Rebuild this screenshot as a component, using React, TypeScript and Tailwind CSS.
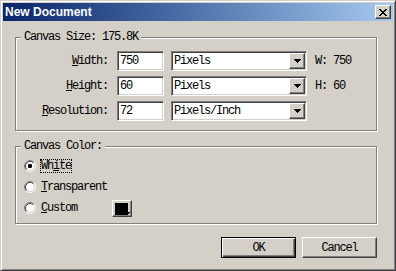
import React from "react";

const sys = "font-['Liberation_Mono',monospace] text-[12px] leading-[12px] tracking-[-1.2px] text-black";
const raised =
  "bg-[#d4d0c8] border border-t-white border-l-white border-r-[#404040] border-b-[#404040] shadow-[inset_-1px_-1px_0_#808080]";
const sunken =
  "bg-white border border-t-[#808080] border-l-[#808080] border-r-white border-b-white shadow-[inset_1px_1px_0_#404040,inset_-1px_-1px_0_#d4d0c8]";
const etched =
  "relative border border-[#808080] shadow-[inset_1px_1px_0_white,1px_1px_0_white]";

function Arrow() {
  return (
    <svg width="7" height="4" shapeRendering="crispEdges">
      <path d="M0 0h7v1h-1v1h-1v1h-1v1h-1v-1h-1v-1h-1v-1h-1z" fill="black" />
    </svg>
  );
}

function Select({ value }: { value: string }) {
  return (
    <div className={`${sunken} w-[136px] h-[20px] flex items-center p-[1px]`}>
      <span className="flex-1 pl-[1px]">{value}</span>
      <div className={`${raised} w-[16px] h-[16px] flex items-center justify-center`}>
        <Arrow />
      </div>
    </div>
  );
}

function Field({ value }: { value: string }) {
  return (
    <div className={`${sunken} w-[47px] h-[20px] flex items-center pl-[1px]`}>
      <span className="pl-[1px]">{value}</span>
    </div>
  );
}

function Radio({ checked }: { checked?: boolean }) {
  return (
    <svg width="12" height="12" viewBox="0 0 12 12" className="shrink-0">
      <circle cx="6" cy="6" r="5" fill="white" />
      <path d="M2.11 9.89A5.5 5.5 0 0 1 9.89 2.11" stroke="#808080" fill="none" />
      <path d="M9.89 2.11A5.5 5.5 0 0 1 2.11 9.89" stroke="white" fill="none" />
      <path d="M2.82 9.18A4.5 4.5 0 0 1 9.18 2.82" stroke="#404040" fill="none" />
      <path d="M9.18 2.82A4.5 4.5 0 0 1 2.82 9.18" stroke="#d4d0c8" fill="none" />
      {checked && <rect x="4" y="4" width="4" height="4" rx="1.2" fill="black" />}
    </svg>
  );
}

function Row({ label, hot, rest, value, unit, info }: { label: string; hot: string; rest: string; value: string; unit: string; info?: string }) {
  return (
    <div className="flex items-center h-[20px]">
      <span className="w-[92px] text-right" aria-label={label}>
        <u>{hot}</u>
        {rest}
      </span>
      <div className="ml-[9px]">
        <Field value={value} />
      </div>
      <div className="ml-[7px]">
        <Select value={unit} />
      </div>
      {info && <span className="ml-[8px]">{info}</span>}
    </div>
  );
}

export default function App() {
  return (
    <div
      className={`${sys} w-[396px] h-[271px] bg-[#d4d0c8] border border-t-[#d4d0c8] border-l-[#d4d0c8] border-r-[#404040] border-b-[#404040] shadow-[inset_1px_1px_0_white,inset_-1px_-1px_0_#808080] p-[2px] overflow-hidden`}
    >
      <div className="h-[18px] bg-linear-to-r from-[#0a246a] to-[#a6caf0] flex items-center pl-[2px] pr-[2px]">
        <span className="flex-1 text-white font-bold font-['Liberation_Sans',Arial,sans-serif] text-[12px] tracking-normal leading-[14px]">
          New Document
        </span>
        <div className={`${raised} w-[16px] h-[14px] flex items-center justify-center`}>
          <svg width="8" height="7" shapeRendering="crispEdges">
            <path
              d="M0 0h2v1h-2zM6 0h2v1h-2zM1 1h2v1h-2zM5 1h2v1h-2zM2 2h4v1h-4zM3 3h2v1h-2zM2 4h4v1h-4zM1 5h2v1h-2zM5 5h2v1h-2zM0 6h2v1h-2zM6 6h2v1h-2z"
              fill="black"
            />
          </svg>
        </div>
      </div>

      <div className="pl-[12px]">
        <div className={`${etched} mt-[16px] w-[362px] h-[94px] pt-[13px] flex flex-col gap-[5px]`}>
          <span className="absolute -top-[7px] left-[5px] px-[3px] bg-[#d4d0c8]">Canvas Size: 175.8K</span>
          <Row label="Width:" hot="W" rest="idth:" value="750" unit="Pixels" info="W: 750" />
          <Row label="Height:" hot="H" rest="eight:" value="60" unit="Pixels" info="H: 60" />
          <Row label="Resolution:" hot="R" rest="esolution:" value="72" unit="Pixels/Inch" />
        </div>

        <div className={`${etched} mt-[15px] w-[362px] h-[78px] pt-[12px] pl-[8px] flex flex-col gap-[7px]`}>
          <span className="absolute -top-[7px] left-[5px] px-[3px] bg-[#d4d0c8]">Canvas Color:</span>
          <div className="flex items-center h-[14px]">
            <Radio checked />
            <span className="ml-[4px] border border-dotted border-black">
              Wh<u>i</u>te
            </span>
          </div>
          <div className="flex items-center h-[14px]">
            <Radio />
            <span className="ml-[4px] border border-transparent">
              <u>T</u>ransparent
            </span>
          </div>
          <div className="flex items-center h-[14px]">
            <Radio />
            <span className="ml-[4px] w-[38px] border border-transparent">
              <u>C</u>ustom
            </span>
            <div className={`${raised} relative ml-[34px] w-[20px] h-[17px] p-[2px]`}>
              <div className="w-[13px] h-[12px] bg-black" />
              <svg width="5" height="3" className="absolute right-[1px] bottom-[1px]" shapeRendering="crispEdges">
                <path d="M0 0h5v1h-1v1h-1v1h-1v-1h-1v-1h-1z" fill="black" />
              </svg>
            </div>
          </div>
        </div>

        <div className="mt-[13px] w-[362px] flex justify-end gap-[6px]">
          <button className="w-[75px] h-[21px] bg-[#d4d0c8] border border-black shadow-[inset_1px_1px_0_white,inset_-1px_-1px_0_#404040,inset_-2px_-2px_0_#808080] flex items-center justify-center">
            OK
          </button>
          <button className={`${raised} w-[75px] h-[21px] flex items-center justify-center`}>Cancel</button>
        </div>
      </div>
    </div>
  );
}
